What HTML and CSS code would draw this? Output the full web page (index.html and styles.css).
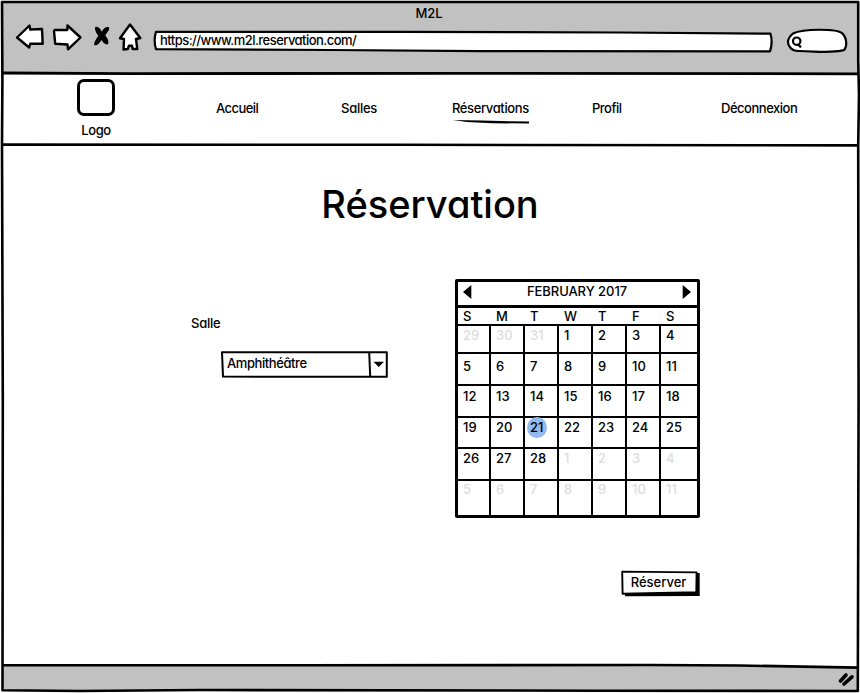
FILE: index.html
```html
<!DOCTYPE html>
<html lang="fr">
<head>
<meta charset="utf-8">
<title>M2L</title>
<link rel="stylesheet" href="styles.css">
</head>
<body>
<div class="window">
  <header class="chrome">
    <div class="window-title">M2L</div>
    <div class="toolbar">
      <svg class="tools" width="136" height="34" viewBox="12 20 136 34">
        <g fill="#fff" stroke="#000" stroke-width="2.4" stroke-linejoin="round">
          <path d="M17 37.5L29.5 25.5L30.2 29.5L42 29L42.7 43.8L30.2 43.8L29.2 47.5Z"/>
          <path d="M54 31L55 29.9L67.3 30L67.5 25.5L80.5 37.5L68 49.3L67.5 44.5L55.2 43.8Z"/>
          <path d="M130 24.5L140.3 38L136 39L137.3 49L132.6 49L132 45.8L129 45.6L127.8 49L123.5 49.5L124 39L120 38.2Z"/>
        </g>
        <path d="M95.5 26.8Q99.5 26.6 101.8 31.8Q104.5 26 109 27.2Q110.5 28.6 105.2 35.2Q109.3 40.5 108.3 43.8Q105.5 46 101.4 40Q98 46 94.5 45.2Q93 43.2 98.3 35.8Q93.5 29.5 95.5 26.8Z"/>
      </svg>
      <div class="address">
        <svg class="shape" width="622" height="26" viewBox="152 28 622 26"><path d="M156 31.8L400 31.8L620 32.5L770.5 33.7Q773 42 770 51.3L480 51.2L330 50L156 49.2Q153.3 40 156 31.8Z" fill="#fff" stroke="#000" stroke-width="2.2" stroke-linejoin="round"/></svg>
        <span class="url">https://www.m2l.reservation.com/</span>
      </div>
      <svg class="search" width="62" height="28" viewBox="786 27 62 28">
        <path d="M793 33.5C803 28.5 837 28.5 842.5 33.5Q846.5 38 846.2 44Q846 50.5 841.5 50.7C830 53 820 51.5 799 51C790 51 783 42 793 33.5Z" fill="#fff" stroke="#000" stroke-width="2.2"/>
        <circle cx="796.7" cy="41.2" r="3.7" fill="none" stroke="#000" stroke-width="2.2"/><path d="M797.5 44L801 47.3" stroke="#000" stroke-width="2.4"/>
      </svg>
    </div>
  </header>
  <nav class="nav">
    <div class="brand"><div class="logo-box"></div><span class="logo-text">Logo</span></div>
    <a class="link accueil">Accueil</a>
    <a class="link salles">Salles</a>
    <a class="link active">Réservations<svg class="underline" width="78" height="5" viewBox="0 0 78 5"><path d="M1 0L30 .6L77 1.6L77 3.6L40 3.2L15 2Z"/></svg></a>
    <a class="link profil">Profil</a>
    <a class="link logout">Déconnexion</a>
  </nav>
  <main class="content">
    <h1 class="title">Réservation</h1>
    <div class="form">
      <div class="room">
        <label class="room-label">Salle</label>
        <div class="select"><span class="select-value">Amphithéâtre</span>
          <svg class="shape" width="168" height="28" viewBox="220 350 168 28"><g fill="none" stroke="#000" stroke-width="2" stroke-linejoin="round"><path d="M222 352.2L300 352.3L386.8 352.3L386.8 376.8L223 376.6Z"/><path d="M369.2 352.5L370.2 376.5"/></g><path d="M373.5 361.7H384L378.7 367Z"/></svg>
        </div>
      </div>
      <section class="booking">
        <div class="calendar">
          <div class="month"><svg class="arrow" width="9" height="14" viewBox="0 0 9 14"><path d="M8.3 0V14L0 7Z"/></svg><span class="month-name">FEBRUARY 2017</span><svg class="arrow" width="9" height="14" viewBox="0 0 9 14"><path d="M.7 0V14L9 7Z"/></svg></div>
          <div class="grid weekdays"><b>S</b><b>M</b><b>T</b><b>W</b><b>T</b><b>F</b><b>S</b></div>
          <div class="grid days">
            <i class="out">29</i><i class="out">30</i><i class="out">31</i><i>1</i><i>2</i><i>3</i><i>4</i>
            <i class="low">5</i><i class="low">6</i><i class="low">7</i><i class="low">8</i><i class="low">9</i><i class="low">10</i><i class="low">11</i>
            <i class="mid">12</i><i class="mid">13</i><i class="mid">14</i><i class="mid">15</i><i class="mid">16</i><i class="mid">17</i><i class="mid">18</i>
            <i>19</i><i>20</i><i class="today">21</i><i>22</i><i>23</i><i>24</i><i>25</i>
            <i>26</i><i>27</i><i>28</i><i class="out">1</i><i class="out">2</i><i class="out">3</i><i class="out">4</i>
            <i class="out">5</i><i class="out">6</i><i class="out">7</i><i class="out">8</i><i class="out">9</i><i class="out">10</i><i class="out">11</i>
          </div>
        </div>
        <button class="reserve"><svg class="shape" width="80" height="28" viewBox="620 569 80 28"><path d="M625 573L699.7 573L699.7 596L625 596.3Z"/><path d="M622.2 571.6L696.6 572.4L696.3 592.3L622.6 593.7Z" fill="#fff" stroke="#000" stroke-width="1.9" stroke-linejoin="round"/></svg><span class="reserve-text">Réserver</span></button>
      </section>
    </div>
  </main>
  <footer class="status"><svg width="20" height="16" viewBox="836 672 20 16"><path d="M840.5 682L846 676M844 685L852 677.8" stroke="#000" stroke-width="3.6" stroke-linecap="round"/></svg></footer>
  <svg class="frame" width="860" height="693" viewBox="0 0 860 693">
    <path d="M740 665.5L858 667.6V664H740Z" fill="#fff"/>
    <g fill="none" stroke="#000" stroke-width="2.6" stroke-linejoin="round">
      <path d="M2 2L858.2 2L858.2 60L859 95L858.2 145L858.6 400L857.8 691L600 690.7L200 690L80 691L2.5 690.3L2.8 400L2 145L2.4 80Z"/>
      <path d="M2 73L130 73.6L450 73.4L859 73.8" stroke-width="2.8"/>
      <path d="M2 144.6L400 144.8L859 145.4"/>
      <path d="M2.5 665.3L300 665.3L650 665L740 665.5L858 667.6"/>
    </g>
  </svg>
</div>
</body>
</html>
```
FILE: styles.css
```css
* { box-sizing: border-box; }
body {
  margin: 0;
  background: #fff;
  color: #000;
  font: 450 13px/16px Inter, "Liberation Sans", sans-serif;
  font-feature-settings: "cv11";
}
.window { position: relative; display: flex; flex-direction: column; width: 860px; height: 693px; padding: 2px; overflow: hidden; }
.chrome { height: 71px; background: #c1c1c1; }
.window-title { height: 18px; padding: 3px 2px 0 0; text-align: center; }
.toolbar { display: flex; padding-left: 10px; }
.tools { flex: none; }
.address { position: relative; width: 622px; height: 26px; margin: 8px 0 0 4px; }
.shape { position: absolute; inset: 0; z-index: 0; }
.url, .select-value, .reserve-text { position: relative; z-index: 1; }
.url { display: block; padding: 4px 0 0 8px; letter-spacing: -.54px; }
.search { flex: none; margin: 7px 0 0 12px; }
.nav { display: flex; height: 72px; letter-spacing: -.38px; }
.brand { display: flex; flex-direction: column; align-items: center; width: 38px; margin: 6px 101px 0 75px; }
.logo-box { width: 38px; height: 37px; border: 3px solid #000; border-radius: 7px; }
.logo-text { margin-top: 6px; }
.link { position: relative; padding-top: 27px; white-space: nowrap; }
.accueil { width: 125px; letter-spacing: -.55px; }
.salles { width: 111px; letter-spacing: -.25px; }
.active { width: 140px; }
.profil { width: 129px; letter-spacing: -.5px; }
.logout { letter-spacing: -.48px; }
.underline { position: absolute; left: 0; top: 47px; }
.content { flex: 1; }
.title { margin: 35px 0 0; text-align: center; font-size: 38px; line-height: 48px; font-weight: 450; }
.form { display: flex; margin-top: 51px; }
.room { width: 453px; padding: 36px 0 0 189px; }
.room-label { display: block; letter-spacing: -.25px; }
.select { position: relative; width: 168px; height: 28px; margin: 19px 0 0 29px; padding: 5px 0 0 7px; letter-spacing: -.42px; }
.booking { display: flex; flex-direction: column; align-items: flex-end; }
.calendar { width: 245px; border: 3px solid #000; border-radius: 2px; }
.month { display: flex; justify-content: space-between; align-items: center; height: 26px; padding: 0 6px 0 5px; border-bottom: 3px solid #000; }
.month-name { padding-bottom: 5px; letter-spacing: -.05px; }
.arrow { margin-bottom: 3px; }
.grid { display: grid; grid-template-columns: 33px repeat(5, 34px) 36px; }
.weekdays { height: 18px; border-bottom: 2px solid #000; }
.weekdays b { font-weight: 450; padding-left: 5px; }
.days { grid-template-rows: 28px 32px 32px 31px 32px 34px; font-weight: 500; }
.days i { position: relative; padding: 1px 0 0 5px; border-right: 2px solid #000; border-bottom: 2px solid #000; font-style: normal; }
.days .low { padding-top: 4px; }
.days .mid { padding-top: 2px; }
.days i:nth-child(7n) { border-right: 0; }
.days i:nth-child(n+36) { padding-top: 0; border-bottom: 0; }
.days .out { color: #ddd; }
.today { z-index: 0; }
.today::before { content: ""; position: absolute; z-index: -1; left: 2px; top: -1px; width: 20px; height: 21px; border-radius: 50%; background: #91baf0; }
.reserve { position: relative; width: 80px; height: 28px; margin-top: 51px; padding: 0 3px 2px 0; border: 0; background: none; color: inherit; font: inherit; font-feature-settings: inherit; }
.status { display: flex; justify-content: flex-end; align-items: center; height: 25px; padding-right: 2px; background: #c1c1c1; }
.frame { position: absolute; inset: 0; z-index: 3; pointer-events: none; }
```
